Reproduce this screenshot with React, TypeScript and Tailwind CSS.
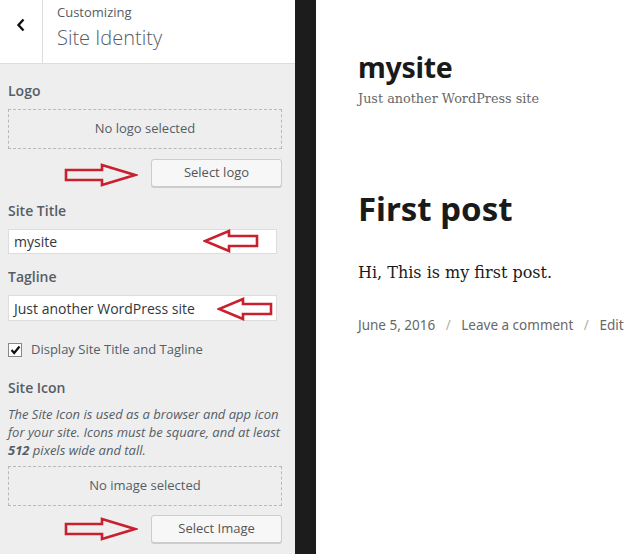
import React from "react";

function ArrowRight({ className }: { className: string }) {
  return (
    <svg className={className} width="74" height="24" viewBox="0 0 74 24" fill="none">
      <polygon
        points="2,7 38,7 38,2 71,12 38,22 38,17 2,17"
        stroke="#c8202e"
        strokeWidth="2.6"
        strokeLinejoin="miter"
        fill="none"
      />
    </svg>
  );
}

function ArrowLeft({ className }: { className: string }) {
  return (
    <svg className={className} width="56" height="24" viewBox="0 0 56 24" fill="none">
      <polygon
        points="54,7 26,7 26,2 2,12 26,22 26,17 54,17"
        stroke="#c8202e"
        strokeWidth="2.6"
        fill="none"
      />
    </svg>
  );
}

export default function App() {
  return (
    <div className="flex w-[638px] h-[554px] overflow-hidden" style={{ fontFamily: '"Open Sans", sans-serif' }}>
      {/* Sidebar */}
      <div className="relative w-[295px] shrink-0 bg-[#eeeeee] flex flex-col">
        <div className="flex h-[64px] bg-white border-b border-[#dddddd]">
          <div className="w-[43px] border-r border-[#dddddd] flex items-center justify-center pb-[14px]">
            <svg width="10" height="14" viewBox="0 0 10 14">
              <path d="M7.5 1.5 L2.5 7 L7.5 12.5" stroke="#111" strokeWidth="2.4" fill="none" />
            </svg>
          </div>
          <div className="pl-[14px] pt-[3px]">
            <div className="text-[13px] text-[#555d66] leading-[18px]">Customizing</div>
            <div className="text-[20px] text-[#555d66] font-light leading-[28px] mt-[3px]">Site Identity</div>
          </div>
        </div>

        <div className="pl-[8px] pr-[13px] flex flex-col text-[#555d66]">
          <div className="text-[14px] font-semibold leading-[20px] mt-[17px]">Logo</div>
          <div className="mt-[8px] h-[40px] border border-dashed border-[#b4b9be] flex items-center justify-center text-[13px] text-[#555d66]">
            No logo selected
          </div>
          <div className="relative flex justify-end mt-[10px]">
            <ArrowRight className="absolute left-[56px] top-[4px]" />
            <div className="w-[131px] h-[28px] bg-[#f7f7f7] border border-[#cccccc] rounded-[3px] shadow-[0_1px_0_#cccccc] flex items-center justify-center text-[13px] text-[#555]">
              Select logo
            </div>
          </div>

          <div className="text-[14px] font-semibold leading-[20px] mt-[14px]">Site Title</div>
          <div className="relative mt-[8px] mr-[5px] h-[25px] bg-white border border-[#dddddd] flex items-center pl-[5px] text-[14px] text-[#32373c]">
            mysite
            <ArrowLeft className="absolute left-[194px] top-[-1px]" />
          </div>

          <div className="text-[14px] font-semibold leading-[20px] mt-[13px]">Tagline</div>
          <div className="relative mt-[8px] mr-[5px] h-[26px] bg-white border border-[#dddddd] flex items-center pl-[5px] text-[14px] text-[#32373c]">
            Just another WordPress site
            <ArrowLeft className="absolute left-[208px] top-[1px]" />
          </div>

          <div className="flex items-center mt-[19px]">
            <div className="w-[14px] h-[14px] border border-[#888] bg-white flex items-center justify-center">
              <svg width="11" height="10" viewBox="0 0 11 10">
                <path d="M1.5 5 L4.2 8 L9.5 1.5" stroke="#111" strokeWidth="2.2" fill="none" />
              </svg>
            </div>
            <span className="ml-[9px] text-[13px] text-[#555d66]">Display Site Title and Tagline</span>
          </div>

          <div className="text-[14px] font-semibold leading-[20px] mt-[18px]">Site Icon</div>
          <div className="text-[13px] italic leading-[18px] mt-[7px] text-[#555d66] whitespace-nowrap">
            The Site Icon is used as a browser and app icon
            <br />
            for your site. Icons must be square, and at least
            <br />
            <b>512</b> pixels wide and tall.
          </div>
          <div className="mt-[7px] h-[40px] border border-dashed border-[#b4b9be] flex items-center justify-center text-[13px] text-[#555d66]">
            No image selected
          </div>
          <div className="relative flex justify-end mt-[9px]">
            <ArrowRight className="absolute left-[56px] top-[2px]" />
            <div className="w-[131px] h-[28px] bg-[#f7f7f7] border border-[#cccccc] rounded-[3px] shadow-[0_1px_0_#cccccc] flex items-center justify-center text-[13px] text-[#555]">
              Select Image
            </div>
          </div>
        </div>
      </div>

      {/* Dark divider */}
      <div className="w-[21px] shrink-0 bg-[#1c1c1c]" />

      {/* Preview */}
      <div className="flex-1 bg-white pl-[42px] pt-[49px]">
        <div className="text-[28.5px] font-bold leading-[36px] text-[#1a1a1a] tracking-[-0.3px]" style={{ fontFamily: '"Noto Sans", sans-serif' }}>
          mysite
        </div>
        <div className="text-[12.8px] text-[#686868] leading-[20px] mt-[4px]" style={{ fontFamily: '"DejaVu Serif", serif' }}>
          Just another WordPress site
        </div>
        <div className="text-[33px] font-bold leading-[40px] text-[#1a1a1a] mt-[80px]" style={{ fontFamily: '"Noto Sans", sans-serif' }}>
          First post
        </div>
        <div className="text-[16px] text-[#1a1a1a] leading-[24px] mt-[32px]" style={{ fontFamily: '"DejaVu Serif", serif' }}>
          Hi, This is my first post.
        </div>
        <div className="text-[13.5px] text-[#686868] leading-[20px] mt-[30px] whitespace-nowrap" style={{ fontFamily: '"Noto Sans", sans-serif' }}>
          June 5, 2016 <span className="text-[#b0b0b0] mx-[7px]">/</span> Leave a comment <span className="text-[#b0b0b0] mx-[7px]">/</span> Edit
        </div>
      </div>
    </div>
  );
}
